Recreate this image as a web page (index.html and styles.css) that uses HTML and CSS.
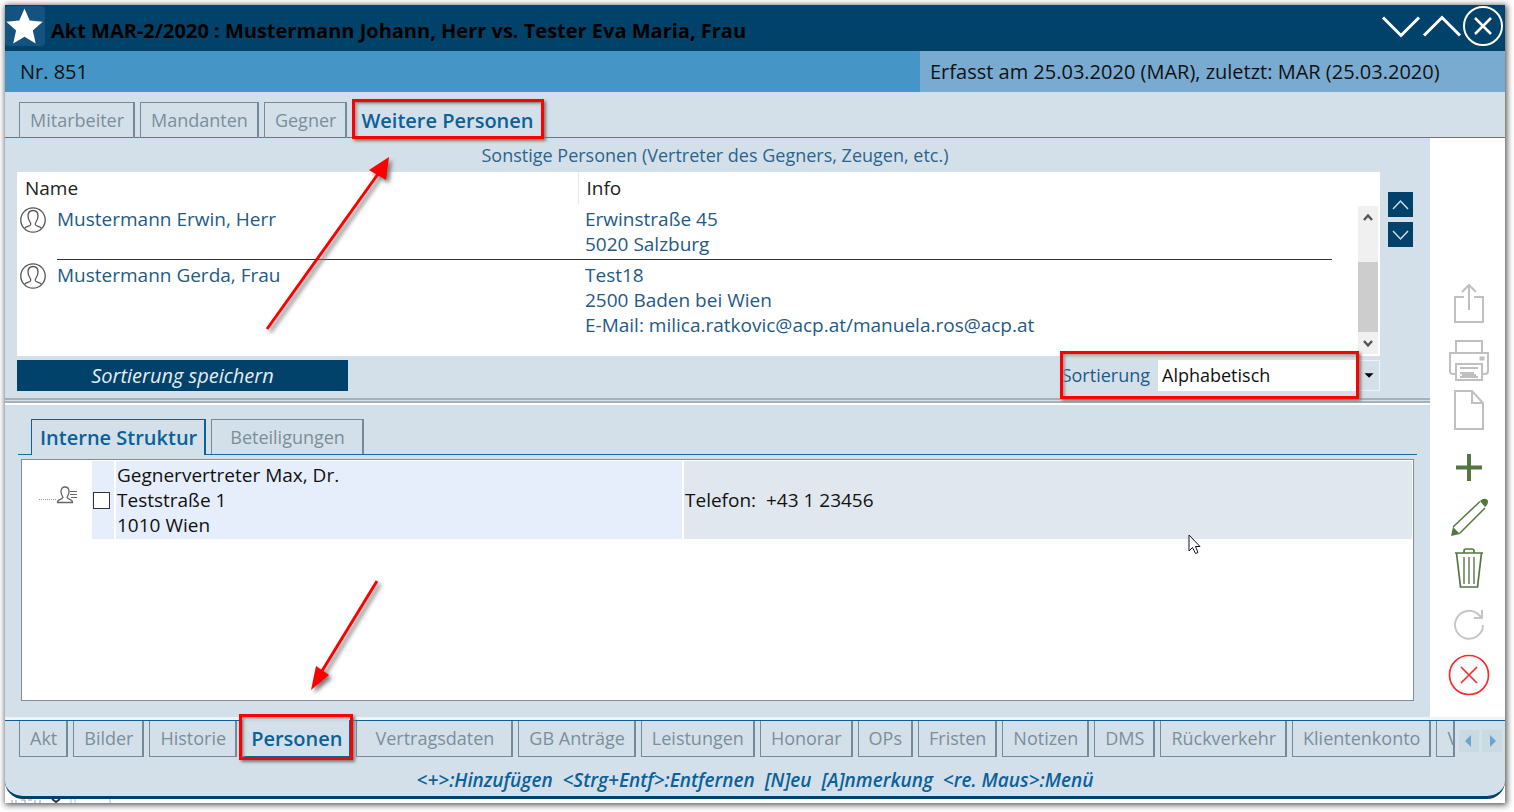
FILE: index.html
```html
<!DOCTYPE html>
<html lang="de">
<head>
<meta charset="utf-8">
<meta name="viewport" content="width=device-width, initial-scale=1">
<title>Akt MAR-2/2020</title>
<link rel="stylesheet" href="styles.css">
</head>
<body>
<svg class="defs" width="0" height="0" aria-hidden="true">
  <symbol id="person" viewBox="0 0 26 26">
    <circle cx="13" cy="13" r="12.2"/>
    <path d="M4.500 21.500c1-2 5-2 6-3.500.6-1 .2-2-.5-3C8.600 13 8 11 8 9c0-3.500 2-5.500 5-5.500s5 2 5 5.500c0 2-.6 4-2 6-.7 1-1.100 2-.5 3 1 1.500 5 1.500 6 3.500"/>
  </symbol>
</svg>
<div class="frame">
  <div class="window">
    <header class="titlebar">
      <button class="star" type="button" aria-label="Favorit"><svg width="40" height="40" viewBox="0 0 40 40"><path fill="#fff" d="M19.500 2.500l5.200 12 13 1.200-9.900 8.800 2.900 13-11.200-6.700-11.300 6.700 2.900-13L1.300 15.700l13-1.200z"/></svg></button>
      <h1 class="title">Akt MAR-2/2020 : Mustermann Johann, Herr vs. Tester Eva Maria, Frau</h1>
      <div class="winbuttons">
        <button type="button" aria-label="Nächster"><svg width="41" height="42" viewBox="0 0 41 42"><path d="M2 12.500l18 18 18-18" fill="none" stroke="#fff" stroke-width="3"/></svg></button>
        <button type="button" aria-label="Vorheriger"><svg width="41" height="42" viewBox="0 0 41 42"><path d="M2 30.500l18-18 18 18" fill="none" stroke="#fff" stroke-width="3"/></svg></button>
        <button type="button" aria-label="Schließen"><svg width="41" height="42" viewBox="0 0 41 42"><g fill="none" stroke="#fff" stroke-width="2"><circle cx="20" cy="21" r="19"/><path d="M12 13l16 16M28 13L12 29" stroke-width="2.500"/></g></svg></button>
      </div>
    </header>
    <div class="subbar">
      <span class="number">Nr. 851</span>
      <span class="stamp">Erfasst am 25.03.2020 (MAR), zuletzt: MAR (25.03.2020)</span>
    </div>
    <nav class="tabs tabs-top">
      <button class="tab" type="button">Mitarbeiter</button>
      <button class="tab" type="button">Mandanten</button>
      <button class="tab" type="button">Gegner</button>
      <button class="tab active marked" type="button">Weitere Personen</button>
    </nav>
    <div class="body">
      <main class="main">
        <section class="people">
          <h2 class="caption">Sonstige Personen (Vertreter des Gegners, Zeugen, etc.)</h2>
          <div class="people-row">
            <div class="listbox">
              <table class="list">
                <colgroup><col class="c-icon"><col class="c-name"><col></colgroup>
                <thead><tr><th colspan="2">Name</th><th>Info</th></tr></thead>
                <tbody>
                  <tr><td class="icon"><svg class="person" width="26" height="26"><use href="#person"/></svg></td><td>Mustermann Erwin, Herr</td><td>Erwinstraße 45<br>5020 Salzburg</td></tr>
                  <tr><td class="icon"><svg class="person" width="26" height="26"><use href="#person"/></svg></td><td>Mustermann Gerda, Frau</td><td>Test18<br>2500 Baden bei Wien<br>E-Mail: milica.ratkovic@acp.at/manuela.ros@acp.at</td></tr>
                </tbody>
              </table>
              <div class="scroll">
                <svg width="20" height="22" viewBox="0 0 20 22"><path d="M6 14l4-4.500 4 4.500" fill="none" stroke="#555" stroke-width="2.400"/></svg>
                <div class="thumb"></div>
                <svg width="20" height="22" viewBox="0 0 20 22"><path d="M6 9l4 4.500 4-4.500" fill="none" stroke="#555" stroke-width="2.400"/></svg>
              </div>
            </div>
            <div class="movers">
              <button type="button" aria-label="Nach oben"><svg width="25" height="25"><path d="M5 17l7.500-8 7.500 8" fill="none" stroke="#cfdce6" stroke-width="1.500"/></svg></button>
              <button type="button" aria-label="Nach unten"><svg width="25" height="25"><path d="M5 9l7.500 8L20 9" fill="none" stroke="#cfdce6" stroke-width="1.500"/></svg></button>
            </div>
          </div>
          <div class="sortbar">
            <button class="save" type="button">Sortierung speichern</button>
            <div class="sorting">
              <label for="sort">Sortierung</label>
              <select id="sort"><option>Alphabetisch</option></select>
              <svg class="drop" width="21" height="31" viewBox="0 0 21 31"><path d="M5 13h10l-5 5z"/></svg>
            </div>
          </div>
        </section>
        <div class="splitter"></div>
        <section class="structure">
          <nav class="tabs tabs-inner">
            <button class="tab active" type="button">Interne Struktur</button>
            <button class="tab wide" type="button">Beteiligungen</button>
          </nav>
          <div class="treebox">
            <table class="tree">
              <colgroup><col class="t-node"><col class="t-check"><col class="t-address"><col></colgroup>
              <tr>
                <td class="node"><svg width="40" height="20" viewBox="0 0 40 20" fill="none" stroke="#666"><path d="M0 14.500h18" stroke="#999" stroke-dasharray="1 1"/><path stroke-width="1.300" d="M18.500 17.500c0-3.500 4-2.500 5.500-5 0-1-2-2.500-2-6C22 3.500 23.500 2 26 2s4 1.500 4 4.500c0 3.500-2 5-2 6 1.500 2.500 5.500 1.500 5.500 5z"/><path d="M31 6.500h7M31 9.500h7M32 12.500h6"/></svg></td>
                <td class="check"><input type="checkbox" aria-label="Gegnervertreter Max, Dr."></td>
                <td class="address">Gegnervertreter Max, Dr.<br>Teststraße 1<br>1010 Wien</td>
                <td class="phone">Telefon:&nbsp; +43 1 23456</td>
              </tr>
            </table>
          </div>
        </section>
      </main>
      <aside class="tools">
        <button type="button" aria-label="Exportieren"><svg width="42" height="42" viewBox="0 0 42 42" fill="none" stroke="#c0c0c0" stroke-width="2"><path d="M16 14H7v25h28V14h-9M21 27V2M14 9l7-7 7 7"/></svg></button>
        <button class="spaced" type="button" aria-label="Drucken"><svg width="42" height="42" viewBox="0 0 42 42" fill="none" stroke="#c0c0c0" stroke-width="2"><path d="M8 12V1h26v11M8 34H5q-3 0-3-3V13h38v18q0 3-3 3h-3M8 24v16h26V24z"/><path d="M12 28h18M12 33h14M14 35h14M12 37h18"/><path d="M32.500 17.500h3v2h-3z"/></svg></button>
        <button type="button" aria-label="Neu"><svg width="42" height="42" viewBox="0 0 42 42" fill="none" stroke="#c0c0c0" stroke-width="2"><path d="M7 1h17l11 12v26H7zM24 1v12h11"/></svg></button>
        <button class="spaced" type="button" aria-label="Hinzufügen"><svg width="42" height="42" viewBox="0 0 42 42" stroke="#54773e" stroke-width="4"><path d="M21 7v27M8 20.500h26"/></svg></button>
        <button type="button" aria-label="Bearbeiten"><svg width="42" height="42" viewBox="0 0 42 42" fill="none" stroke="#54773e" stroke-width="1.500"><path d="M5 30L32 4.500M11.500 36.500L37 11"/><path fill="#54773e" stroke="none" d="M3 39l2-9 7 7zM32 4c3-3 7-3 8 0 0 3-1 4-3 6z"/></svg></button>
        <button type="button" aria-label="Löschen"><svg width="42" height="42" viewBox="0 0 42 42" fill="none" stroke="#54773e" stroke-width="1.700"><path d="M7 6h28M8.500 6l4 34h17l4-34M16 6V4q0-2 2-2h6q2 0 2 2v2"/><path d="M16 10v27M21 10v27M26 10v27" stroke="#8ba07c" stroke-width="2"/></svg></button>
        <button class="spaced" type="button" aria-label="Aktualisieren"><svg width="42" height="42" viewBox="0 0 42 42" fill="none" stroke="#c6c6c6" stroke-width="2"><path d="M35 21a14 14 0 1 1-4-10l3 3M34 6v8h-8"/></svg></button>
        <button type="button" aria-label="Abbrechen"><svg width="42" height="42" viewBox="0 0 42 42" fill="none" stroke="#fb2b2b" stroke-width="1.700"><circle cx="21" cy="21" r="19.500"/><path d="M13 13l16 16M29 13L13 29"/></svg></button>
      </aside>
    </div>
    <nav class="tabs tabs-bottom">
      <div class="strip">
        <button class="tab" type="button">Akt</button>
        <button class="tab" type="button">Bilder</button>
        <button class="tab" type="button">Historie</button>
        <button class="tab active marked" type="button">Personen</button>
        <button class="tab wide" type="button">Vertragsdaten</button>
        <button class="tab" type="button">GB Anträge</button>
        <button class="tab" type="button">Leistungen</button>
        <button class="tab" type="button">Honorar</button>
        <button class="tab" type="button">OPs</button>
        <button class="tab" type="button">Fristen</button>
        <button class="tab" type="button">Notizen</button>
        <button class="tab" type="button">DMS</button>
        <button class="tab" type="button">Rückverkehr</button>
        <button class="tab" type="button">Klientenkonto</button>
        <button class="tab clipped" type="button">V</button>
      </div>
      <div class="pager">
        <button type="button" aria-label="Zurück"><svg width="20" height="22"><path fill="#6aa5d0" d="M12 5v12l-6-6z"/></svg></button>
        <button type="button" aria-label="Weiter"><svg width="20" height="22"><path fill="#6aa5d0" d="M8 5v12l6-6z"/></svg></button>
      </div>
    </nav>
    <footer class="hints">&lt;+&gt;:Hinzufügen&nbsp; &lt;Strg+Entf&gt;:Entfernen&nbsp; [N]eu&nbsp; [A]nmerkung&nbsp; &lt;re. Maus&gt;:Menü</footer>
  </div>
  <svg class="under" width="120" height="4" viewBox="0 0 120 4"><path d="M7 1v3M11 1v3M16 1h4v3M23 1h4M30 1v3M35 1v3" stroke="#99a" fill="none"/><path d="M47 0l4 3 4-3" stroke="#333" stroke-width="2" fill="none"/><path d="M66 0v4M70 0v4M105 0v4" stroke="#bbb"/></svg>
  <svg class="arrow arrow-up" width="130" height="184" viewBox="0 0 130 184"><path d="M3 175L114 20" stroke="#f00" stroke-width="3"/><path fill="#f00" d="M125 3l-3 23-17-10z"/></svg>
  <svg class="arrow arrow-down" width="76" height="120" viewBox="0 0 76 120"><path d="M69 5L14 95" stroke="#f00" stroke-width="3"/><path fill="#f00" d="M3 114l5-24 13 9z"/></svg>
  <svg class="cursor" width="14" height="21" viewBox="0 0 14 21"><path d="M1 1v16l3.500-3.500 3 6 2.500-1-2.500-6H12z" fill="#fff" stroke="#112"/></svg>
</div>
</body>
</html>
```
FILE: styles.css
```css
* { box-sizing: border-box; }

body {
  margin: 0;
  min-height: 100vh;
  padding: 5px 9px 9px 5px;
  display: flex;
  background: #fff;
  color: #111;
  font: 19px/25px "Open Sans", "Noto Sans", sans-serif;
}

button {
  font: inherit;
  color: inherit;
  border: 0;
  padding: 0;
  margin: 0;
  background: none;
}
button svg { display: block; }
h1, h2 { margin: 0; font: inherit; }
.defs { position: absolute; }

.frame {
  position: relative;
  flex: 1;
  min-width: 0;
  display: flex;
  flex-direction: column;
  background: #fff;
  box-shadow: 1px 1px 6px 1px #555;
}
.window {
  flex: 1;
  display: flex;
  flex-direction: column;
  background: #d4e0e9;
  border-bottom: 3px solid #00426a;
  border-radius: 0 0 18px 18px;
  overflow: hidden;
}

.titlebar {
  display: flex;
  align-items: center;
  height: 46px;
  background: #00426a;
}
.star {
  align-self: flex-start;
  margin-top: 1px;
  border-radius: 4px;
  background: #145280;
}
.title {
  flex: 1;
  padding: 4px 0 0 6px;
  font-size: 20px;
  font-weight: 700;
  color: #000;
}
.winbuttons { display: flex; align-self: flex-start; padding-right: 1px; }

.subbar {
  display: flex;
  height: 41px;
  line-height: 41px;
  font-size: 20px;
  background: #4595c6;
}
.number { flex: 1; padding-left: 15px; }
.stamp { flex: 0 0 39%; padding-left: 10px; background: #79abd1; }

.tabs { display: flex; gap: 5px; }
.tab {
  position: relative;
  height: 36px;
  padding: 0 9px 0 10px;
  border: 1px solid #748a98;
  border-width: 1px 2px 1px 1px;
  color: #7b8e9b;
  font-size: 18px;
  white-space: nowrap;
}
.tab.active {
  padding: 0 7px 0 8px;
  border-color: #0b6199;
  background: #d4e0e9;
  color: #0b6199;
  font-size: 20px;
  font-weight: 600;
}
.tab.wide { padding: 0 17px 0 18px; }
.marked::after {
  content: "";
  position: absolute;
  inset: -4px;
  border: 3px solid #f00;
  box-shadow: 2px 2px 3px #777, inset 2px 2px 3px #999;
}
.tabs-top {
  height: 46px;
  padding: 10px 14px 0;
  border-bottom: 1px solid #3e83b0;
}
.tabs-top .tab { border-bottom: 0; }
.tabs-top .marked::after { inset: -4px -3px -1px -1px; }

.body { flex: 1; display: flex; }
.main { flex: 1; min-width: 0; display: flex; flex-direction: column; }

.people { padding: 0 17px 7px 12px; color: #1f5a86; }
.caption {
  height: 34px;
  line-height: 34px;
  text-align: center;
  font-size: 18px;
  color: #2c648c;
}
.people-row { display: flex; gap: 8px; }
.listbox {
  flex: 1;
  display: flex;
  height: 184px;
  background: #fff;
}
.list {
  flex: 1;
  margin-right: 26px;
  align-self: flex-start;
  table-layout: fixed;
  border-collapse: collapse;
  text-align: left;
}
.c-icon { width: 40px; }
.c-name { width: 521px; }
.list th {
  height: 32px;
  padding: 0 8px;
  color: #222;
  font-weight: 400;
}
.list th + th { border-left: 1px solid #e4e8ec; }
.list td { padding: 3px 0 2px; vertical-align: top; }
.list td + td + td { padding-left: 7px; }
.list tr + tr td { border-top: 1px solid #333; }
.list tr + tr .icon { border-top: 0; }
.list .icon { padding-left: 3px; }
.person {
  display: block;
  fill: none;
  stroke: #555;
  stroke-width: 1.3px;
}
.scroll {
  display: flex;
  flex-direction: column;
  justify-content: space-between;
  width: 20px;
  margin: 34px 2px 2px 0;
  background: #f0f0f0;
}
.scroll svg { display: block; }
.thumb { height: 70px; margin-top: auto; background: #cdcdcd; }
.movers {
  display: flex;
  flex-direction: column;
  gap: 5px;
  padding-top: 20px;
}
.movers button { background: #00426a; }

.sortbar {
  display: flex;
  justify-content: space-between;
  height: 35px;
  padding: 4px 33px 0 0;
}
.save {
  width: 331px;
  background: #00426a;
  color: #e4edf4;
  font-size: 20px;
  font-style: italic;
}
.sorting {
  position: relative;
  display: flex;
  align-items: center;
}
.sorting::after {
  content: "";
  position: absolute;
  inset: -9px 21px -8px -2px;
  border: 3px solid #f00;
  box-shadow: 2px 2px 3px #777, inset 2px 2px 3px #999;
  pointer-events: none;
}
.sorting label { padding-right: 8px; font-size: 18px; }
.sorting select {
  width: 200px;
  height: 31px;
  padding: 0 4px;
  border: 0;
  border-radius: 0;
  appearance: none;
  background: #fff;
  color: #111;
  font: inherit;
  font-size: 18px;
}
.drop { margin-left: 1px; border: 1px solid #eef3f7; }

.splitter {
  height: 7px;
  border-top: 2px solid #a5b0ba;
  border-bottom: 2px solid #fff;
  background: linear-gradient(#d4e0e9 1px, #a5b0ba 1px);
}

.structure {
  flex: 1;
  display: flex;
  flex-direction: column;
  padding: 14px 13px 19px;
}
.tabs-inner { padding-left: 13px; border-bottom: 1px solid #1b6ca2; }
.tabs-inner .tab { height: 35px; border-bottom: 0; }
.tabs-inner .active { height: 36px; margin-bottom: -1px; }
.treebox {
  flex: 1;
  margin: 4px 3px 0;
  padding: 1px;
  border: 1px solid #858c98;
  background: #fff;
}
.tree { width: 100%; table-layout: fixed; border-collapse: collapse; }
.tree td { height: 78px; padding: 0 1px; border-right: 2px solid #fff; }
.tree td:last-child { border-right: 0; }
.t-node { width: 68px; }
.t-check { width: 24px; }
.t-address { width: 568px; }
.tree .node { padding: 0 0 10px 16px; }
.node svg { display: block; }
.check, .address { background: #e6eefc; }
.phone { background: #e0e7ee; }
.check input {
  display: block;
  width: 17px;
  height: 17px;
  margin: 0;
  appearance: none;
  border: 1px solid #333;
  background: #fff;
}

.tools {
  display: flex;
  flex-direction: column;
  justify-content: flex-end;
  align-items: center;
  gap: 8px;
  width: 75px;
  padding: 0 0 24px 3px;
  background: #fff;
}
.tools .spaced { margin-top: 7px; }

.tabs-bottom {
  padding: 0 3px 0 14px;
  border-top: 1px solid #0b6199;
  box-shadow: 0 -3px #eef3f7;
}
.strip { display: flex; flex: 1; gap: 5px; min-width: 0; }
.tabs-bottom .tab { flex: none; border-top: 0; }
.tabs-bottom .clipped { width: 19px; padding-right: 0; overflow: hidden; }
.tabs-bottom .active { margin-top: -1px; height: 37px; }
.tabs-bottom .marked::after { top: -6px; }
.pager { display: flex; gap: 3px; padding-top: 9px; }
.pager button { height: 22px; background: #cbd9e3; }

.hints {
  height: 39px;
  padding-top: 11px;
  text-align: center;
  color: #0b6199;
  font-style: italic;
  font-weight: 600;
}
.under { display: block; }

.arrow, .cursor { position: absolute; pointer-events: none; }
.arrow { filter: drop-shadow(3px 3px 2px #777); }
.arrow-up { left: 259px; top: 149px; }
.arrow-down { left: 303px; top: 571px; }
.cursor { left: 1183px; top: 529px; }
```
